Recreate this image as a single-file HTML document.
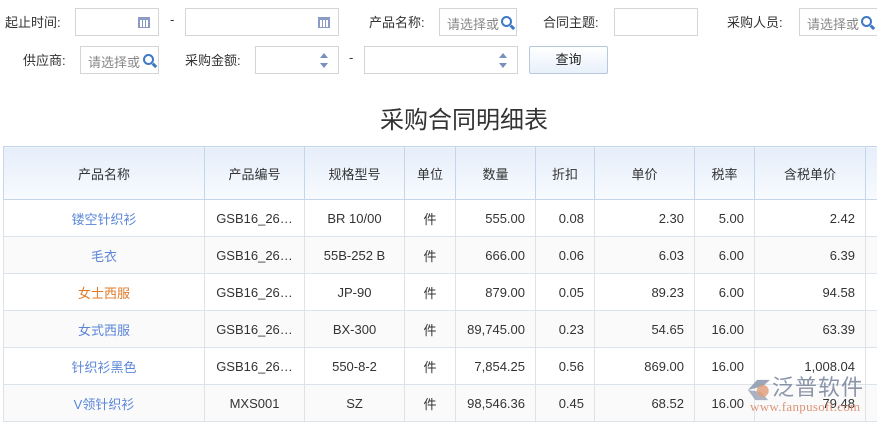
<!DOCTYPE html>
<html><head><meta charset="utf-8">
<style>
*{margin:0;padding:0;box-sizing:border-box}
body{width:877px;height:423px;overflow:hidden;background:#fff;font-family:"Liberation Sans","Noto Sans CJK SC",sans-serif;font-size:13px;color:#333;position:relative}
.a{position:absolute;white-space:nowrap}
.in{position:absolute;border:1px solid #d5d5d5;background:#fff;height:28px}
.ph{color:#888;font-size:13px;position:absolute;left:7px;top:5px}
.q{position:absolute;right:4px;top:7px;width:11px;height:11px;border:2px solid #3d79c6;border-radius:50%}
.q:after{content:"";position:absolute;width:2.5px;height:5px;background:#3d79c6;left:8px;top:7px;transform:rotate(-45deg)}
.cal{position:absolute;right:8px;top:8px;width:12px;height:11px;border:1px solid #8b9bc6;background:repeating-linear-gradient(90deg,#8b9bc6 0 1px,transparent 1px 3px);border-top:3px solid #8b9bc6}
.sp{position:absolute;right:10px;width:0;height:0;border-left:4px solid transparent;border-right:4px solid transparent}
table{position:absolute;left:3px;top:146px;border-collapse:collapse;table-layout:fixed;width:902px}
td,th{border:1px solid #dde3ea;height:37px;font-weight:normal;font-size:13px;padding:0 10px;overflow:hidden;white-space:nowrap}
th{height:53px;background:linear-gradient(#e6eefa,#f8fbff);border-color:#c4d6ea;color:#333}
tr:nth-child(odd) td{background:#fafafa}
.r{text-align:right}.c{text-align:center}
.bl{color:#5b86d8}.or{color:#e07b2a}
</style></head><body>
<div class="a" style="left:5px;top:12px">起止时间:</div>
<div class="in" style="left:75px;top:8px;width:84px"><div class="cal"></div></div>
<div class="a" style="left:170px;top:12px">-</div>
<div class="in" style="left:185px;top:8px;width:154px"><div class="cal"></div></div>
<div class="a" style="left:369px;top:12px">产品名称:</div>
<div class="in" style="left:439px;top:8px;width:78px;overflow:hidden"><span class="ph">请选择或</span><div class="q"></div></div>
<div class="a" style="left:543px;top:12px">合同主题:</div>
<div class="in" style="left:614px;top:8px;width:84px"></div>
<div class="a" style="left:727px;top:12px">采购人员:</div>
<div class="in" style="left:799px;top:8px;width:80px;overflow:hidden"><span class="ph">请选择或</span><div class="q" style="right:6px"></div></div>

<div class="a" style="left:23px;top:50px">供应商:</div>
<div class="in" style="left:80px;top:46px;width:79px;overflow:hidden"><span class="ph">请选择或</span><div class="q"></div></div>
<div class="a" style="left:185px;top:50px">采购金额:</div>
<div class="in" style="left:255px;top:46px;width:84px"><div class="sp" style="top:6px;border-bottom:5px solid #7a8fc0"></div><div class="sp" style="top:16px;border-top:5px solid #7a8fc0"></div></div>
<div class="a" style="left:349px;top:50px">-</div>
<div class="in" style="left:364px;top:46px;width:154px"><div class="sp" style="top:6px;border-bottom:5px solid #7a8fc0"></div><div class="sp" style="top:16px;border-top:5px solid #7a8fc0"></div></div>
<div class="in" style="left:529px;top:46px;width:79px;border-color:#b8c8dc;border-radius:2px;background:linear-gradient(#fff,#e8f0fa);text-align:center;line-height:26px;color:#222">查询</div>

<div class="a" style="left:380px;top:100px;font-size:24px;color:#333">采购合同明细表</div>

<table>
<colgroup><col style="width:201px"><col style="width:100px"><col style="width:100px"><col style="width:51px"><col style="width:80px"><col style="width:59px"><col style="width:100px"><col style="width:60px"><col style="width:111px"><col style="width:40px"></colgroup>
<tr><th>产品名称</th><th>产品编号</th><th>规格型号</th><th>单位</th><th>数量</th><th>折扣</th><th>单价</th><th>税率</th><th>含税单价</th><th></th></tr>
<tr><td class="c bl">镂空针织衫</td><td class="c">GSB16_26…</td><td class="c">BR 10/00</td><td class="c">件</td><td class="r">555.00</td><td class="r">0.08</td><td class="r">2.30</td><td class="r">5.00</td><td class="r">2.42</td><td></td></tr>
<tr><td class="c bl">毛衣</td><td class="c">GSB16_26…</td><td class="c">55B-252 B</td><td class="c">件</td><td class="r">666.00</td><td class="r">0.06</td><td class="r">6.03</td><td class="r">6.00</td><td class="r">6.39</td><td></td></tr>
<tr><td class="c or">女士西服</td><td class="c">GSB16_26…</td><td class="c">JP-90</td><td class="c">件</td><td class="r">879.00</td><td class="r">0.05</td><td class="r">89.23</td><td class="r">6.00</td><td class="r">94.58</td><td></td></tr>
<tr><td class="c bl">女式西服</td><td class="c">GSB16_26…</td><td class="c">BX-300</td><td class="c">件</td><td class="r">89,745.00</td><td class="r">0.23</td><td class="r">54.65</td><td class="r">16.00</td><td class="r">63.39</td><td></td></tr>
<tr><td class="c bl">针织衫黑色</td><td class="c">GSB16_26…</td><td class="c">550-8-2</td><td class="c">件</td><td class="r">7,854.25</td><td class="r">0.56</td><td class="r">869.00</td><td class="r">16.00</td><td class="r">1,008.04</td><td></td></tr>
<tr><td class="c bl">V领针织衫</td><td class="c">MXS001</td><td class="c">SZ</td><td class="c">件</td><td class="r">98,546.36</td><td class="r">0.45</td><td class="r">68.52</td><td class="r">16.00</td><td class="r">79.48</td><td></td></tr>
</table>

<svg class="a" style="left:745px;top:378px" width="28" height="24" viewBox="0 0 30 26"><path d="M3 13 L13 2 L27 2 L19 9 Z" fill="#8a96ad" opacity=".85"/><path d="M3 13 L11 24 L25 24 L17 15 Z" fill="#8a96ad" opacity=".7"/><circle cx="19" cy="14" r="6.5" fill="#e0a080" opacity=".85"/></svg>
<div class="a" style="left:772px;top:375px;font-size:22px;line-height:26px;color:#7f8aa0;opacity:.9;letter-spacing:1px">泛普软件</div>
<div class="a" style="left:750px;top:399px;font-family:'Liberation Serif',serif;font-size:13px;letter-spacing:.3px;color:#d98a6a;opacity:.9">www.fanpusoft.com</div>
</body></html>
